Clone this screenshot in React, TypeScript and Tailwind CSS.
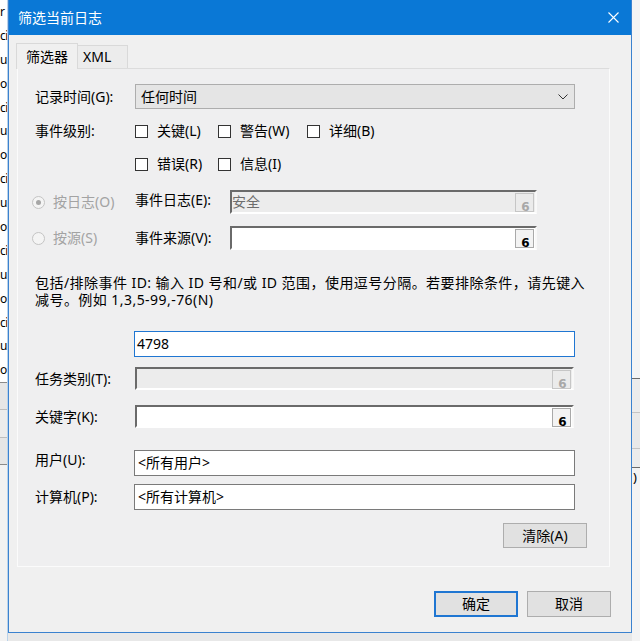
import React from "react";

function SmallBtn({ disabled }: { disabled?: boolean }) {
  return (
    <div
      className={
        disabled
          ? "w-[19px] h-[19px] border border-[#c6c6c6] bg-[#ebebeb] text-[#a8a8a8] flex justify-center overflow-hidden"
          : "w-[19px] h-[19px] border border-[#a9a9a9] bg-[#f3f3f3] text-black flex justify-center overflow-hidden"
      }
    >
      <span className="text-[12px] font-bold leading-none mt-[7px] pl-[2px] font-['DejaVu_Sans',sans-serif]">6</span>
    </div>
  );
}

function Sunken({ w, h, disabled, text }: { w: string; h: string; disabled?: boolean; text?: string }) {
  return (
    <div
      className={`${w} ${h} flex border-t-2 border-l-2 border-b-2 border-r-2 border-t-[#6a6a6a] border-l-[#6a6a6a] border-b-white border-r-[#f8f8f8] ${
        disabled ? "bg-[#ececec]" : "bg-white"
      }`}
    >
      <div className="flex-1 flex items-center text-[14px] text-[#6d6d6d] leading-none">{text}</div>
      <div className="pt-[1px] pr-[1px]">
        <SmallBtn disabled={disabled} />
      </div>
    </div>
  );
}

function Cb({ label, w }: { label: string; w: string }) {
  return (
    <div className={`flex items-center ${w}`}>
      <div className="w-[13px] h-[13px] border border-[#333333] bg-white" />
      <span className="ml-[9px] text-[14px] leading-none">{label}</span>
    </div>
  );
}

function Radio({ checked, label }: { checked?: boolean; label: string }) {
  return (
    <div className="flex items-center w-[103px]">
      <div className="w-[13px] h-[13px] rounded-full border border-[#c4c4c4] bg-[#f4f4f4] flex items-center justify-center">
        {checked && <div className="w-[5px] h-[5px] rounded-full bg-[#a6a6a6]" />}
      </div>
      <span className="ml-[8px] text-[14px] leading-none text-[#a3a3a3]">{label}</span>
    </div>
  );
}

function Btn({ label, primary }: { label: string; primary?: boolean }) {
  return (
    <div
      className={
        primary
          ? "w-[84px] h-[26px] bg-[#e1e1e1] border-2 border-[#1f76d2] flex items-center justify-center text-[14px] leading-none"
          : "w-[84px] h-[26px] bg-[#e1e1e1] border border-[#adadad] flex items-center justify-center text-[14px] leading-none"
      }
    >
      {label}
    </div>
  );
}

const leftRows = ["r", "ci", "ul", "ol", "ci", "ul", "ol", "ci", "ul", "ol", "ci", "ul", "ol", "ci", "ul", "ol"];

export default function App() {
  return (
    <div className="w-[640px] h-[641px] overflow-hidden flex bg-[#e9e9e9] text-black font-['Noto_Sans','Noto_Sans_CJK_SC',sans-serif]">
      {/* left background strip */}
      <div className="w-[8px] shrink-0 h-[641px] flex flex-col overflow-hidden border-r border-[#b9d2ea] bg-[#f2f2f2]">
        <div className="bg-white flex flex-col">
          {leftRows.map((t, i) => (
            <div key={i} className="h-[23.9px] flex items-center text-[12px] leading-none whitespace-nowrap tracking-[-0.5px]">
              {t}
            </div>
          ))}
        </div>
        <div className="h-px bg-[#8a8a8a]" />
        <div className="h-[26px] bg-[#e6e6e6]" />
        <div className="h-px bg-[#bdbdbd]" />
        <div className="h-[27px] bg-[#ececec]" />
        <div className="h-px bg-[#bdbdbd]" />
        <div className="h-[26px] bg-[#e6e6e6]" />
        <div className="h-px bg-[#8a8a8a]" />
      </div>

      {/* dialog column */}
      <div className="w-[624px] shrink-0 flex flex-col">
        <div className="h-[633px] flex flex-col border-l border-r border-b border-[#3b82cf] bg-[#f0f0f0]">
          {/* title bar */}
          <div className="h-[35px] bg-[#0a78d6] flex items-center justify-between">
            <span className="pl-[9px] text-[14px] leading-none text-white">筛选当前日志</span>
            <div className="w-[36px] h-full flex items-center justify-center">
              <svg width="11" height="11" viewBox="0 0 11 11">
                <path d="M0.5 0.5 L10.5 10.5 M10.5 0.5 L0.5 10.5" stroke="white" strokeWidth="1.1" fill="none" />
              </svg>
            </div>
          </div>

          {/* body */}
          <div className="flex-1 flex flex-col pt-[8px]">
            {/* tabs */}
            <div className="flex items-end h-[25px] pl-[7px] relative z-10">
              <div className="w-[62px] h-[26px] -mb-px bg-[#f0f0f0] border-t border-l border-r border-[#d9d9d9] flex items-center pl-[9px] text-[14px] leading-none">
                筛选器
              </div>
              <div className="w-[50px] h-[23px] bg-[#ececec] border-t border-r border-[#d9d9d9] flex items-center pl-[5px] text-[14px] leading-none">
                XML
              </div>
            </div>

            {/* tab panel */}
            <div className="ml-[8px] w-[593px] h-[499px] border border-[#fbfbfb] border-t-[#dcdcdc] bg-[#efeff0] flex flex-col">
              {/* 记录时间 */}
              <div className="mt-[15px] h-[25px] flex items-center pl-[17px]">
                <div className="w-[100px] text-[14px] leading-none">记录时间(G):</div>
                <div className="w-[440px] h-[25px] bg-[#e5e5e5] border border-[#adadad] flex items-center justify-between pl-[5px] pr-[6px]">
                  <span className="text-[14px] leading-none">任何时间</span>
                  <svg width="10" height="6" viewBox="0 0 10 6">
                    <path d="M0.5 0.5 L5 5 L9.5 0.5" stroke="#333" strokeWidth="1" fill="none" />
                  </svg>
                </div>
              </div>

              {/* 事件级别 row 1 */}
              <div className="mt-[12px] h-[20px] flex items-center pl-[17px]">
                <div className="w-[100px] text-[14px] leading-none">事件级别:</div>
                <Cb label="关键(L)" w="w-[83px]" />
                <Cb label="警告(W)" w="w-[89px]" />
                <Cb label="详细(B)" w="w-[100px]" />
              </div>
              {/* row 2 */}
              <div className="mt-[13px] h-[20px] flex items-center pl-[117px]">
                <Cb label="错误(R)" w="w-[83px]" />
                <Cb label="信息(I)" w="w-[89px]" />
              </div>

              {/* 事件日志 */}
              <div className="mt-[16px] h-[24px] flex items-center pl-[14px]">
                <Radio checked label="按日志(O)" />
                <div className="w-[95px] text-[14px] leading-none -mt-[5px]">事件日志(E):</div>
                <Sunken w="w-[307px]" h="h-[24px]" disabled text="安全" />
              </div>

              {/* 事件来源 */}
              <div className="mt-[12px] h-[24px] flex items-center pl-[14px]">
                <Radio label="按源(S)" />
                <div className="w-[95px] text-[14px] leading-none">事件来源(V):</div>
                <Sunken w="w-[307px]" h="h-[24px]" />
              </div>

              {/* paragraph */}
              <div className="mt-[24px] pl-[17px] text-[14px] whitespace-nowrap tracking-[0.45px] flex flex-col">
                <div className="h-[17px] flex items-center leading-none">
                  包括/排除事件 ID: 输入 ID 号和/或 ID 范围，使用逗号分隔。若要排除条件，请先键入
                </div>
                <div className="h-[17px] flex items-center leading-none">减号。例如 1,3,5-99,-76(N)</div>
              </div>

              {/* 4798 */}
              <div className="mt-[23px] h-[26px] pl-[116px] flex">
                <div className="w-[441px] h-[26px] bg-white border border-[#1f76d2] flex items-center pl-[2px] text-[14px] leading-none">
                  4798
                </div>
              </div>

              {/* 任务类别 */}
              <div className="mt-[10px] h-[23px] flex items-center pl-[17px]">
                <div className="w-[100px] text-[14px] leading-none">任务类别(T):</div>
                <Sunken w="w-[439px]" h="h-[23px]" disabled />
              </div>

              {/* 关键字 */}
              <div className="mt-[15px] h-[23px] flex items-center pl-[17px]">
                <div className="w-[100px] text-[14px] leading-none">关键字(K):</div>
                <Sunken w="w-[439px]" h="h-[23px]" />
              </div>

              {/* 用户 */}
              <div className="mt-[22px] h-[26px] flex items-center pl-[17px]">
                <div className="w-[99px] text-[14px] leading-none -mt-[6px]">用户(U):</div>
                <div className="w-[441px] h-[26px] bg-white border border-[#7a7a7a] flex items-center pl-[3px] text-[14px] leading-none">
                  &lt;所有用户&gt;
                </div>
              </div>

              {/* 计算机 */}
              <div className="mt-[8px] h-[26px] flex items-center pl-[17px]">
                <div className="w-[99px] text-[14px] leading-none -mt-[1px]">计算机(P):</div>
                <div className="w-[441px] h-[26px] bg-white border border-[#7a7a7a] flex items-center pl-[3px] text-[14px] leading-none">
                  &lt;所有计算机&gt;
                </div>
              </div>

              {/* 清除 */}
              <div className="mt-[13px] h-[25px] flex pl-[485px]">
                <div className="w-[84px] h-[25px] bg-[#e1e1e1] border border-[#adadad] flex items-center justify-center text-[14px] leading-none">
                  清除(A)
                </div>
              </div>
            </div>

            {/* bottom buttons */}
            <div className="mt-[24px] flex pl-[425px] gap-[9px]">
              <Btn label="确定" primary />
              <Btn label="取消" />
            </div>
          </div>
        </div>
        <div className="flex-1 bg-[#e8e8e8]" />
      </div>

      {/* right background strip */}
      <div className="w-[8px] shrink-0 h-[641px] flex flex-col bg-[#f3f3f3] overflow-hidden">
        <div className="h-[378px] bg-[#f4f4f4]" />
        <div className="h-px bg-[#6a6a6a]" />
        <div className="h-[33px] bg-[#ececec]" />
        <div className="h-px bg-[#c4c4c4]" />
        <div className="h-[35px] bg-[#e9e9e9]" />
        <div className="h-px bg-[#c4c4c4]" />
        <div className="h-[18px] bg-[#ececec]" />
        <div className="h-px bg-[#6a6a6a]" />
        <div className="h-[18px] flex items-center text-[13px] leading-none pl-[1px]">)</div>
        <div className="flex-1 bg-[#f3f3f3]" />
      </div>
    </div>
  );
}
